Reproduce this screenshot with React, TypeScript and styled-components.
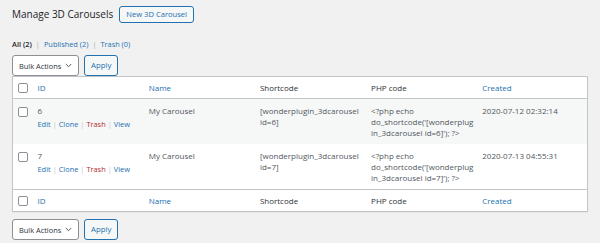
import styled, { createGlobalStyle } from "styled-components";

const GlobalStyle = createGlobalStyle`
  html, body {
    margin: 0;
    padding: 0;
    background: #f1f1f1;
  }
  body {
    font-family: "Open Sans", "Noto Sans", sans-serif;
    color: #50575e;
  }
`;

type Carousel = {
  id: number;
  name: string;
  created: string;
};

const carousels: Carousel[] = [
  { id: 6, name: "My Carousel", created: "2020-07-12 02:32:14" },
  { id: 7, name: "My Carousel", created: "2020-07-13 04:55:31" },
];

const Chevron = () => (
  <svg width="7" height="5" viewBox="0 0 7 5" aria-hidden="true">
    <path d="M0.8 1 L3.5 3.7 L6.2 1" fill="none" stroke="#50575e" strokeWidth="1" />
  </svg>
);

const TableNav = () => (
  <NavBar>
    <Select>
      Bulk Actions
      <Chevron />
    </Select>
    <OutlineButton>Apply</OutlineButton>
  </NavBar>
);

const HeadRow = () => (
  <tr>
    <CheckCell as="th">
      <Checkbox />
    </CheckCell>
    <Th $sortable>ID</Th>
    <Th $sortable>Name</Th>
    <Th>Shortcode</Th>
    <Th>PHP code</Th>
    <Th $sortable>Created</Th>
  </tr>
);

export default function App() {
  return (
    <Page>
      <GlobalStyle />
      <Header>
        <Title>Manage 3D Carousels</Title>
        <OutlineButton $small>New 3D Carousel</OutlineButton>
      </Header>
      <Filters>
        <Current>All (2)</Current>
        <Sep>|</Sep>
        <FilterLink>Published (2)</FilterLink>
        <Sep>|</Sep>
        <FilterLink>Trash (0)</FilterLink>
      </Filters>
      <TopNav>
        <TableNav />
      </TopNav>
      <Table>
        <colgroup>
          <col style={{ width: 19 }} />
          <col />
          <col />
          <col />
          <col />
          <col />
        </colgroup>
        <thead>
          <HeadRow />
        </thead>
        <tbody>
          {carousels.map((c, i) => (
            <Row key={c.id} $striped={i % 2 === 0}>
              <CheckCell>
                <Checkbox />
              </CheckCell>
              <Td>
                {c.id}
                <Actions>
                  <ActionLink>Edit</ActionLink>
                  <ActionSep>|</ActionSep>
                  <ActionLink>Clone</ActionLink>
                  <ActionSep>|</ActionSep>
                  <ActionLink $danger>Trash</ActionLink>
                  <ActionSep>|</ActionSep>
                  <ActionLink>View</ActionLink>
                </Actions>
              </Td>
              <Td>{c.name}</Td>
              <Td>
                <Line>[wonderplugin_3dcarousel</Line>
                <Line>id={c.id}]</Line>
              </Td>
              <Td>
                <Line>{"<?php echo"}</Line>
                <Line>{"do_shortcode('[wonderplug"}</Line>
                <Line>{`in_3dcarousel id=${c.id}]'); ?>`}</Line>
              </Td>
              <Td>{c.created}</Td>
            </Row>
          ))}
        </tbody>
        <tfoot>
          <HeadRow />
        </tfoot>
      </Table>
      <BottomNav>
        <TableNav />
      </BottomNav>
    </Page>
  );
}

const Page = styled.div`
  padding: 0 12px;
  width: 576px;
`;

const Header = styled.div`
  display: flex;
  align-items: center;
  gap: 6px;
  padding-top: 6px;
  height: 17px;
`;

const Title = styled.h1`
  margin: 0;
  font-size: 10px;
  font-weight: 400;
  color: #1d2327;
  line-height: 17px;
`;

const OutlineButton = styled.button<{ $small?: boolean }>`
  box-sizing: border-box;
  height: ${(p) => (p.$small ? 17 : 21)}px;
  padding: 0 6px;
  border: 1px solid #2271b1;
  border-radius: 3px;
  background: #f6f7f7;
  color: #2271b1;
  font-family: inherit;
  font-size: ${(p) => (p.$small ? 7.6 : 7.8)}px;
  line-height: 1;
  cursor: pointer;
`;

const Filters = styled.div`
  display: flex;
  align-items: center;
  margin-top: 16px;
  height: 10px;
  font-size: 7.4px;
  line-height: 10px;
`;

const Current = styled.span`
  color: #1d2327;
  font-weight: 600;
`;

const Sep = styled.span`
  color: #a7aaad;
  margin: 0 4px;
`;

const FilterLink = styled.span`
  color: #2271b1;
`;

const TopNav = styled.div`
  margin-top: 6px;
`;

const NavBar = styled.div`
  display: flex;
  align-items: center;
  gap: 5px;
  height: 21px;
`;

const Select = styled.div`
  box-sizing: border-box;
  display: flex;
  align-items: center;
  justify-content: space-between;
  width: 67px;
  height: 21px;
  padding: 0 6px;
  border: 1px solid #8c8f94;
  border-radius: 3px;
  background: #fff;
  color: #2c3338;
  font-size: 7.4px;
  white-space: nowrap;
`;

const Table = styled.table`
  box-sizing: border-box;
  width: 576px;
  border: 1px solid #c3c4c7;
  border-collapse: collapse;
  table-layout: fixed;
  background: #fff;
  box-shadow: 0 1px 1px rgba(0, 0, 0, 0.04);
  font-size: 8px;
  line-height: 11px;

  thead tr {
    border-bottom: 1px solid #c3c4c7;
  }
  tfoot tr {
    border-top: 1px solid #c3c4c7;
  }
  thead th,
  tfoot th {
    height: 21px;
    box-sizing: border-box;
  }
`;

const Th = styled.th<{ $sortable?: boolean }>`
  padding: 5px 6px;
  text-align: left;
  font-weight: 400;
  color: ${(p) => (p.$sortable ? "#2271b1" : "#2c3338")};
`;

const Row = styled.tr<{ $striped: boolean }>`
  background: ${(p) => (p.$striped ? "#f6f7f7" : "#fff")};
`;

const Td = styled.td`
  padding: 6px 6px 5px;
  height: 34px;
  vertical-align: top;
  color: #50575e;
`;

const Line = styled.span`
  display: block;
  white-space: nowrap;
`;

const CheckCell = styled.td`
  padding: 8px 0 0 5px;
  vertical-align: top;
  thead &,
  tfoot & {
    padding-top: 0;
    vertical-align: middle;
  }
`;

const Checkbox = styled.span`
  display: block;
  box-sizing: border-box;
  width: 10px;
  height: 10px;
  border: 1px solid #8c8f94;
  border-radius: 2px;
  background: #fff;
`;

const Actions = styled.div`
  margin-top: 3px;
  display: flex;
  align-items: center;
  font-size: 7.4px;
  white-space: nowrap;
`;

const ActionLink = styled.span<{ $danger?: boolean }>`
  color: ${(p) => (p.$danger ? "#b32d2e" : "#2271b1")};
`;

const ActionSep = styled.span`
  color: #c3c4c7;
  margin: 0 2px;
`;

const BottomNav = styled.div`
  margin-top: 7px;
`;
